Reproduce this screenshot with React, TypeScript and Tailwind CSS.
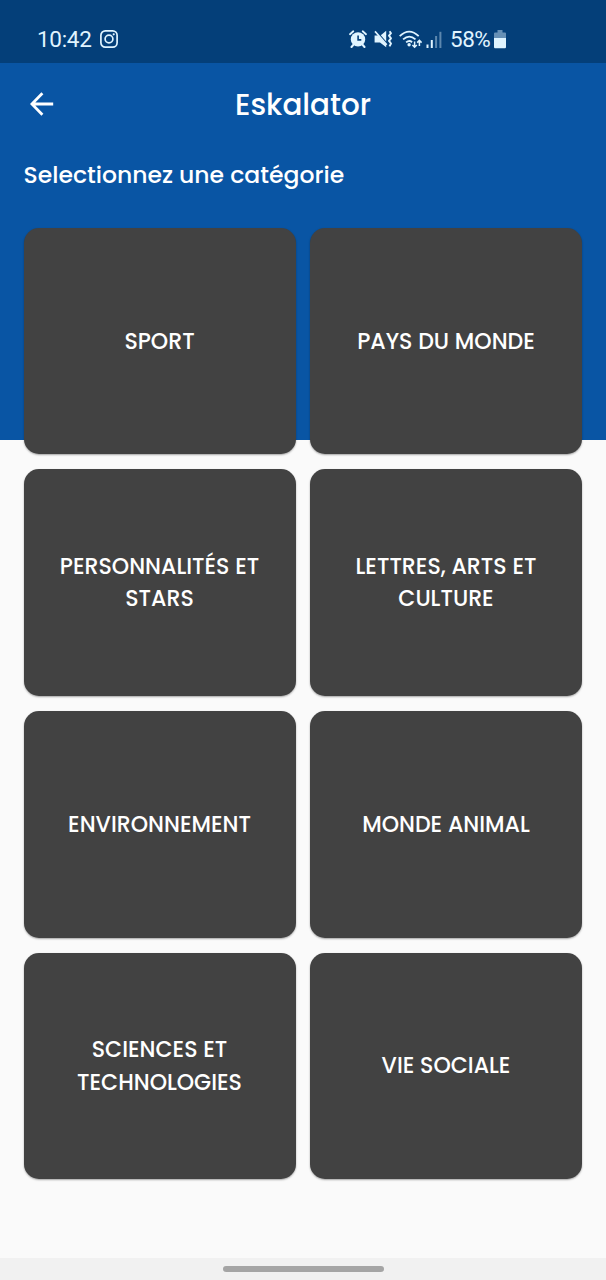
import { useState } from "react";

const categories = [
  { id: "sport", lines: ["SPORT"] },
  { id: "pays", lines: ["PAYS DU MONDE"] },
  { id: "stars", lines: ["PERSONNALITÉS ET", "STARS"] },
  { id: "culture", lines: ["LETTRES, ARTS ET", "CULTURE"] },
  { id: "environnement", lines: ["ENVIRONNEMENT"] },
  { id: "animal", lines: ["MONDE ANIMAL"] },
  { id: "sciences", lines: ["SCIENCES ET", "TECHNOLOGIES"] },
  { id: "social", lines: ["VIE SOCIALE"] },
];

function InstagramIcon() {
  return (
    <svg className="ml-[9px] h-[18px] w-[18px]" viewBox="0 0 18 18" fill="none" stroke="currentColor" strokeWidth="1.7">
      <rect x="0.9" y="0.9" width="16.2" height="16.2" rx="4.4" />
      <circle cx="9" cy="9" r="3.9" />
      <circle cx="13.7" cy="4.3" r="1.1" fill="currentColor" stroke="none" />
    </svg>
  );
}

function AlarmIcon() {
  return (
    <svg className="h-[18px] w-[18px]" viewBox="0 0 18 18" fill="none" stroke="currentColor">
      <circle cx="9" cy="9.4" r="7.2" fill="currentColor" stroke="none" />
      <path d="M1 4.2 4.3 1.3M17 4.2l-3.3-2.9" strokeWidth="1.8" strokeLinecap="round" />
      <path d="m4.2 15-1.7 2M13.8 15l1.7 2" strokeWidth="2" strokeLinecap="round" />
      <path d="M9.1 5.6v4.3h3.2" stroke="#043f79" strokeWidth="1.6" />
    </svg>
  );
}

function MuteVibrateIcon() {
  return (
    <svg className="h-[18px] w-[18px]" viewBox="0 0 18 18" fill="none" stroke="currentColor">
      <path d="M.6 5.6h3.6l8 8.8v2.8L6 12.6H.6z" fill="currentColor" stroke="none" />
      <path d="M12.2.8v10.6L6.8 5.2z" fill="currentColor" stroke="none" />
      <path d="m1 1.4 11.8 13.3" strokeWidth="1.6" />
      <path d="m15.6 1.2 1.4 2-2 2.5 2 2.6-2 2.6 2 2.6-1.5 2.9" strokeWidth="1.9" strokeLinejoin="round" />
    </svg>
  );
}

function WifiIcon() {
  return (
    <svg className="h-[19px] w-[24px]" viewBox="0 0 24 19" fill="none" stroke="currentColor">
      <path d="M.7 6.2Q10.2-3 19.7 6.2M4.1 9.4q6.2-5.6 12.4 0M7.1 12.4q3.2-2.6 6-.2" strokeWidth="1.8" />
      <circle cx="10.1" cy="14.8" r="1.7" fill="currentColor" stroke="none" />
      <path d="M15.6 11.6v5.6m-2.2-2.2 2.2 2.2 2.2-2.2M20.4 16v-5.6m-2.2 2.2 2.2-2.2 2.2 2.2" strokeWidth="1.5" />
    </svg>
  );
}

function SignalIcon() {
  return (
    <svg className="h-[17px] w-[16px]" viewBox="0 0 16 17" fill="currentColor">
      <rect x="0.5" y="13.5" width="2" height="3.5" />
      <rect x="4.8" y="9" width="2" height="8" />
      <rect x="9.1" y="5" width="2" height="12" opacity="0.4" />
      <rect x="13.4" y="0.8" width="2" height="16.2" opacity="0.4" />
    </svg>
  );
}

function BatteryIcon() {
  return (
    <svg className="h-[19px] w-[12px]" viewBox="0 0 12 19" fill="currentColor">
      <path d="M3.5 0h5v2.5H11q1 0 1 1V8H0V3.5q0-1 1-1h2.5z" opacity="0.45" />
      <path d="M0 8h12v9q0 1.2-1 1.2H1q-1 0-1-1.2z" />
    </svg>
  );
}

function StatusBar() {
  return (
    <div className="flex h-[63px] items-start bg-[#043f79] pt-[27px] pl-[37px] font-[Roboto,sans-serif] font-normal text-[#e0f4ff]">
      <div className="flex h-6 w-[312px] items-center">
        <span className="w-[54px] text-[22.5px] leading-6 tracking-[-0.3px]">10:42</span>
        <InstagramIcon />
      </div>
      <div className="flex h-6 items-center">
        <AlarmIcon />
        <span className="w-[7px]" />
        <MuteVibrateIcon />
        <span className="w-[7px]" />
        <WifiIcon />
        <span className="w-[3px]" />
        <SignalIcon />
        <span className="ml-2 w-[44px] text-[22.5px] leading-6 tracking-[-0.5px]">58%</span>
        <BatteryIcon />
      </div>
    </div>
  );
}

export default function App() {
  const [selected, setSelected] = useState<string | null>(null);

  return (
    <div className="flex h-[1280px] w-[606px] flex-col overflow-hidden bg-[#fafafa] font-[Poppins,Inter,sans-serif] font-medium text-white">
      {/* Header, the grid below slides over its bottom part */}
      <header className="h-[440px] shrink-0 bg-[#0955a4]">
        <StatusBar />
        <div className="grid h-[82px] grid-cols-[70px_1fr_70px] items-center">
          <button className="pl-[29.5px]" aria-label="Retour">
            <svg className="h-6 w-6" viewBox="0 0 24 24" fill="none" stroke="currentColor" strokeWidth="2.8">
              <path d="M23.2 12H2.5M12.4 1.3 1.9 12l10.5 10.7" />
            </svg>
          </button>
          <h1 className="pt-[2px] text-center text-[29.4px] leading-9">Eskalator</h1>
        </div>
        <p className="pt-[14px] pl-[23.5px] text-[23.5px] leading-8">Selectionnez une catégorie</p>
      </header>

      <main className="-mt-[212.2px] grid shrink-0 grid-cols-2 gap-x-[14.5px] gap-y-[15px] pr-[24px] pl-[23.5px]">
        {categories.map((category) => (
          <button
            key={category.id}
            aria-pressed={selected === category.id}
            onClick={() => setSelected(category.id)}
            className="flex h-[226.6px] flex-col items-center justify-center rounded-[15px] bg-[#424242] pt-[1.5px] text-[22.1px] leading-[32.5px] shadow-[0_1px_2px_rgba(0,0,0,0.35)]"
          >
            {category.lines.map((line) => (
              <span key={line}>{line}</span>
            ))}
          </button>
        ))}
      </main>

      {/* Gesture bar */}
      <div className="mt-auto flex h-[22px] shrink-0 justify-center bg-[#f1f1f1] pt-2">
        <div className="h-[6px] w-[161px] rounded-full bg-[#a5a5a5]" />
      </div>
    </div>
  );
}
